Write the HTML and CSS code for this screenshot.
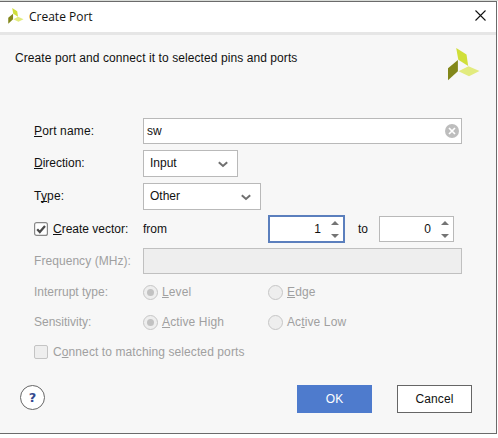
FILE: index.html
```html
<!DOCTYPE html>
<html lang="en">
<head>
<meta charset="utf-8">
<title>Create Port</title>
<link rel="stylesheet" href="styles.css">
</head>
<body>
<svg class="defs" width="0" height="0" aria-hidden="true">
  <symbol id="logo" viewBox="0 0 32 33">
    <path d="M8.2 0 18.5 6.5 20.2 18 10.3 11.7Z" fill="#d0df3a"/>
    <path d="M0 20.2 9.9 12v11.3L0 32.3Z" fill="#82871a"/>
    <path d="M10.5 23.3 20.5 18.3 31.5 23 21 28.3Z" fill="#e2eb7e"/>
  </symbol>
  <symbol id="chevron" viewBox="0 0 10 7"><path d="M.8 1.2 5 5 9.200 1.2" fill="none" stroke="#707070" stroke-width="2"/></symbol>
  <symbol id="arrows" viewBox="0 0 8 17"><path d="M0 4 4 0l4 4ZM0 13h8l-4 4Z" fill="#747474"/></symbol>
</svg>
<main class="dialog">
  <header class="titlebar">
    <svg class="app-icon"><use href="#logo"/></svg>
    <h1 class="title">Create Port</h1>
    <svg class="close" viewBox="0 0 11 11"><path d="M.5.5l10 10M10.500.5l-10 10" stroke="#111" stroke-width="1.1"/></svg>
  </header>
  <section class="intro">
    <p class="intro-text">Create port and connect it to selected pins and ports</p>
    <svg class="brand"><use href="#logo"/></svg>
  </section>
  <form class="form">
    <div class="row name-row">
      <span class="label port-label"><u>P</u>ort name:</span>
      <div class="field text-field"><span>sw</span>
        <svg class="clear" viewBox="0 0 14 14"><circle cx="7" cy="7" r="7" fill="#bdbdbd"/><path d="M4 4l6 6M10 4l-6 6" stroke="#fff" stroke-width="1.7"/></svg>
      </div>
    </div>
    <div class="row direction-row">
      <span class="label"><u>D</u>irection:</span>
      <div class="field combo combo-input"><span>Input</span><svg class="chevron"><use href="#chevron"/></svg></div>
    </div>
    <div class="row type-row">
      <span class="label type-label">T<u>y</u>pe:</span>
      <div class="field combo combo-type"><span>Other</span><svg class="chevron"><use href="#chevron"/></svg></div>
    </div>
    <div class="row vector-row">
      <span class="label check-label"><svg class="check" viewBox="0 0 14 14"><rect x=".6" y=".6" width="12.800" height="12.800" rx="2" fill="#fff" stroke="#888" stroke-width="1.2"/><path d="M3.200 7.200 5.800 10l5.200-6" fill="none" stroke="#4a4a4a" stroke-width="2.200"/></svg><span><u>C</u>reate vector:</span></span>
      <span class="from">from</span>
      <div class="field spinner focused"><span>1</span><svg class="arrows"><use href="#arrows"/></svg></div>
      <span class="to">to</span>
      <div class="field spinner"><span>0</span><svg class="arrows"><use href="#arrows"/></svg></div>
    </div>
    <div class="row frequency-row disabled">
      <span class="label freq-label">Frequency (MHz):</span>
      <div class="field text-field off"></div>
    </div>
    <div class="row radio-row disabled">
      <span class="label">Interrupt type:</span>
      <span class="option"><i class="radio on"></i><span><u>L</u>evel</span></span>
      <span class="option"><i class="radio"></i><span><u>E</u>dge</span></span>
    </div>
    <div class="row radio-row disabled">
      <span class="label">Sensitivity:</span>
      <span class="option"><i class="radio on"></i><span class="high"><u>A</u>ctive High</span></span>
      <span class="option"><i class="radio"></i><span>Ac<u>t</u>ive Low</span></span>
    </div>
    <div class="row radio-row disabled">
      <span class="check-label"><i class="check box"></i><span class="connect">C<u>o</u>nnect to matching selected ports</span></span>
    </div>
  </form>
  <footer class="footer">
    <span class="help">?</span>
    <span class="button primary">OK</span>
    <span class="button">Cancel</span>
  </footer>
</main>
</body>
</html>
```

FILE: styles.css
```css
* { box-sizing: border-box; }
body {
  margin: 0;
  padding-top: 1px;
  height: 438px;
  overflow: hidden;
  background: linear-gradient(#d9dcd8 1px, #fff 1px);
  color: #111;
  font: 12px/14px "Liberation Sans", Arial, sans-serif;
}
.defs { display: block; }
.dialog {
  width: 497px;
  height: 433px;
  border: solid #6b6b6b;
  border-width: 1px 1px 1px 0;
  background: #f7f7f7;
}
.titlebar {
  display: flex;
  align-items: center;
  height: 33px;
  padding: 0 10px 3px 8px;
  border-bottom: 3px solid #e6e6e6;
  background: #fff;
}
.app-icon { width: 16px; height: 16px; }
.title {
  flex: 1;
  margin: 0 0 0 5px;
  padding-top: 2px;
  font: 12px/16px "Open Sans", sans-serif;
}
.close { width: 11px; height: 11px; }
.intro {
  display: flex;
  justify-content: space-between;
  height: 83px;
  padding: 13px 16px 0 15px;
}
.intro-text { margin: 3px 0 0; letter-spacing: 0.08px; }
.brand { width: 32px; height: 33px; }
.row {
  display: flex;
  align-items: center;
  padding-left: 34px;
  white-space: nowrap;
}
.label { width: 109px; flex: none; }
u {
  text-decoration: underline 1px;
  text-underline-offset: 1px;
  text-decoration-skip-ink: none;
}
.field {
  display: flex;
  align-items: center;
  height: 26px;
  border: 1px solid #b9b9b9;
  background: #fff;
}
.name-row { height: 26px; margin-bottom: 6px; }
.direction-row { height: 27px; margin-bottom: 6px; }
.type-row { height: 27px; margin-bottom: 5px; }
.direction-row span, .type-row span { padding-bottom: 1px; }
.vector-row { height: 28px; margin-bottom: 5px; }
.frequency-row { height: 26px; margin-bottom: 3px; }
.radio-row { height: 30px; }
.port-label { letter-spacing: 0.15px; }
.type-label { letter-spacing: 0.2px; }
.freq-label { letter-spacing: 0.06px; }
.text-field { width: 319px; padding: 0 2px 0 3px; justify-content: space-between; }
.text-field.off { background: #eee; border-color: #c0c0c0; }
.clear { width: 14px; height: 14px; }
.combo { height: 27px; padding: 0 9px 0 6px; justify-content: space-between; }
.combo-input { width: 95px; }
.combo-type { width: 118px; }
.chevron { width: 10px; height: 7px; margin-top: 1px; }
.check-label { display: flex; align-items: center; gap: 5px; }
.check { width: 14px; height: 14px; flex: none; }
.from { width: 125px; }
.to { width: 34px; padding-left: 13px; }
.spinner { width: 75px; padding: 0 4px; justify-content: flex-end; gap: 10px; }
.spinner.focused { width: 77px; height: 28px; border: 2px solid #5b7fbd; }
.arrows { width: 8px; height: 17px; }
.disabled { color: #a0a0a0; }
.option { display: flex; align-items: center; gap: 4px; width: 125px; }
.option span { letter-spacing: 0.12px; }
.radio {
  display: grid;
  place-items: center;
  width: 15px;
  height: 15px;
  border: 1px solid #c6c6c6;
  border-radius: 50%;
  background: #eee;
}
.radio.on::before {
  content: "";
  width: 7px;
  height: 7px;
  border-radius: 50%;
  background: #c2c2c2;
}
.connect { letter-spacing: 0.1px; }
.box { border: 1px solid #c4c4c4; border-radius: 2px; background: #eee; }
.footer { display: flex; padding: 18px 24px 0 20px; }
.help {
  width: 25px;
  height: 25px;
  margin-right: auto;
  border: 1px solid #666;
  border-radius: 50%;
  background: #fff;
  color: #34498f;
  font: bold 13px/23px "DejaVu Sans", sans-serif;
  text-align: center;
}
.button {
  width: 75px;
  height: 28px;
  margin-left: 25px;
  border: 1px solid #666;
  background: #fff;
  letter-spacing: 0.1px;
  line-height: 26px;
  text-align: center;
}
.primary { border-color: #4e7bcd; background: #4e7bcd; color: #fff; }
```
